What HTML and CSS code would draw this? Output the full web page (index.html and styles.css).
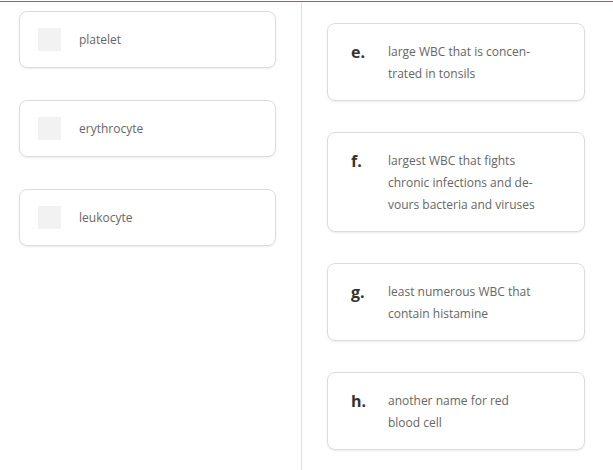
FILE: index.html
```html
<!DOCTYPE html>
<html>
<head>
<meta charset="utf-8">
<link rel="stylesheet" href="styles.css">
</head>
<body>
<div class="topline"></div>
<div class="layout">
  <div class="col-left">
    <div class="term-card">
      <span class="box"></span>
      <span class="term">platelet</span>
    </div>
    <div class="term-card">
      <span class="box"></span>
      <span class="term">erythrocyte</span>
    </div>
    <div class="term-card">
      <span class="box"></span>
      <span class="term">leukocyte</span>
    </div>
  </div>
  <div class="divider"></div>
  <div class="col-right">
    <div class="def-card">
      <span class="letter">e.</span>
      <span class="def">large WBC that is concen-<br>trated in tonsils</span>
    </div>
    <div class="def-card">
      <span class="letter">f.</span>
      <span class="def">largest WBC that fights<br>chronic infections and de-<br>vours bacteria and viruses</span>
    </div>
    <div class="def-card">
      <span class="letter">g.</span>
      <span class="def">least numerous WBC that<br>contain histamine</span>
    </div>
    <div class="def-card">
      <span class="letter">h.</span>
      <span class="def">another name for red<br>blood cell</span>
    </div>
  </div>
</div>
</body>
</html>
```
FILE: styles.css
```css
html, body {
  margin: 0;
  padding: 0;
  background: #ffffff;
  font-family: "Open Sans", "Noto Sans", sans-serif;
}
.topline {
  height: 1px;
  margin-top: 1px;
  background: #7d6c6c;
}
.layout {
  display: flex;
  height: 468px;
}
.col-left {
  width: 301px;
  padding: 9px 0 0 19px;
  box-sizing: border-box;
  display: flex;
  flex-direction: column;
  gap: 32px;
}
.divider {
  width: 1px;
  background: #e2e2e2;
}
.col-right {
  flex: 1;
  padding: 21px 0 0 25px;
  box-sizing: border-box;
  display: flex;
  flex-direction: column;
  gap: 31px;
}
.term-card {
  width: 257px;
  height: 57px;
  box-sizing: border-box;
  border: 1px solid #dcdcdc;
  border-radius: 8px;
  box-shadow: 0 1px 2px rgba(0,0,0,0.08);
  display: flex;
  align-items: center;
  padding-left: 18px;
  gap: 18px;
}
.box {
  width: 23px;
  height: 23px;
  background: #f2f2f2;
  flex: none;
}
.term {
  font-size: 12px;
  color: #666666;
}
.def-card {
  width: 258px;
  box-sizing: border-box;
  border: 1px solid #dcdcdc;
  border-radius: 8px;
  box-shadow: 0 1px 2px rgba(0,0,0,0.08);
  display: flex;
  align-items: flex-start;
  padding: 17px 0 15px 23px;
}
.letter {
  width: 37px;
  flex: none;
  font-size: 16px;
  font-weight: 700;
  color: #333333;
  line-height: 22px;
}
.def {
  font-size: 12px;
  line-height: 22px;
  color: #666666;
}
```
